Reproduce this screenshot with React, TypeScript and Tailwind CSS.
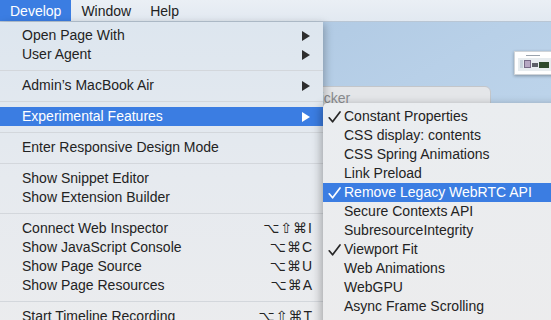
import React from 'react';

const font = { fontFamily: '"Liberation Sans", "DejaVu Sans", Arial, sans-serif' };

type Item =
  | { sep: true }
  | { sep?: false; label: string; arrow?: boolean; keys?: string; active?: boolean };

const mainItems: Item[] = [
  { label: 'Open Page With', arrow: true },
  { label: 'User Agent', arrow: true },
  { sep: true },
  { label: 'Admin’s MacBook Air', arrow: true },
  { sep: true },
  { label: 'Experimental Features', arrow: true, active: true },
  { sep: true },
  { label: 'Enter Responsive Design Mode' },
  { sep: true },
  { label: 'Show Snippet Editor' },
  { label: 'Show Extension Builder' },
  { sep: true },
  { label: 'Connect Web Inspector', keys: '⌥⇧⌘I' },
  { label: 'Show JavaScript Console', keys: '⌥⌘C' },
  { label: 'Show Page Source', keys: '⌥⌘U' },
  { label: 'Show Page Resources', keys: '⌥⌘A' },
  { sep: true },
  { label: 'Start Timeline Recording', keys: '⌥⇧⌘T' },
];

const features = [
  { label: 'Constant Properties', checked: true },
  { label: 'CSS display: contents' },
  { label: 'CSS Spring Animations' },
  { label: 'Link Preload' },
  { label: 'Remove Legacy WebRTC API', checked: true, active: true },
  { label: 'Secure Contexts API' },
  { label: 'SubresourceIntegrity' },
  { label: 'Viewport Fit', checked: true },
  { label: 'Web Animations' },
  { label: 'WebGPU' },
  { label: 'Async Frame Scrolling' },
];

const Arrow = ({ white }: { white?: boolean }) => (
  <svg width="8" height="10" viewBox="0 0 8 10">
    <path d="M0 0 L8 5 L0 10 Z" fill={white ? '#ffffff' : '#2e2e2e'} />
  </svg>
);

const Check = ({ white }: { white?: boolean }) => (
  <svg width="13" height="12" viewBox="0 0 13 12">
    <path
      d="M1.2 6.8 L4.6 10.8 L12 1"
      fill="none"
      stroke={white ? '#ffffff' : '#262626'}
      strokeWidth="1.7"
      strokeLinecap="round"
      strokeLinejoin="round"
    />
  </svg>
);

const MenuRow = ({ item }: { item: Item }) => {
  if (item.sep) {
    return (
      <div className="flex h-[12px] items-center">
        <div className="h-px w-full bg-[#d3d7dc]" />
      </div>
    );
  }
  return (
    <div
      className={
        item.active
          ? 'flex h-[19px] items-center justify-between bg-[#3b7de2] pb-[2px] pl-[22px] text-white'
          : 'flex h-[19px] items-center justify-between pb-[2px] pl-[22px] text-[#232323]'
      }
    >
      <span>{item.label}</span>
      {item.arrow && (
        <span className="flex pt-[2px] pr-[13px]">
          <Arrow white={item.active} />
        </span>
      )}
      {item.keys && <span className="pr-[10px] tracking-[1px]">{item.keys}</span>}
    </div>
  );
};

export default function App() {
  return (
    <div
      className="relative h-[320px] w-[551px] overflow-hidden bg-gradient-to-br from-[#a6c1dd] via-[#b8d0e8] to-[#c6dbef] text-[14px] leading-none"
      style={font}
    >
      {/* menu bar */}
      <div className="flex h-[22px] items-stretch border-b border-[#b9c6d4] bg-gradient-to-b from-[#eaeff5] to-[#e2e9f1] text-[#222]">
        <div className="flex items-center bg-[#3b7de2] px-[10px] text-white">Develop</div>
        <div className="flex items-center px-[10px]">Window</div>
        <div className="flex items-center px-[9px]">Help</div>
      </div>

      {/* background window (partly hidden) */}
      <div className="absolute left-[260px] top-[86px] h-[40px] w-[231px] rounded-tr-[6px] border border-[#c3c6ca] bg-[#e4e6e9] pl-[13px] pt-[4px] text-[#8a8c8f]">
        <span>Color Picker</span>
        <div className="mt-[2px] mr-[10px] h-px bg-[#c5c8cc]" />
      </div>

      {/* thumbnail on desktop */}
      <div className="absolute left-[514px] top-[51px] flex h-[24px] w-[50px] flex-col gap-[2px] border border-[#d0d4d8] bg-white p-[3px] shadow-[0_1px_3px_rgba(0,0,0,0.3)]">
        <div className="ml-[8px] h-px w-[14px] bg-[#9aa3ad]" />
        <div className="flex h-[14px] gap-[1px] bg-[#e7ecef] p-[2px]">
          <div className="h-[8px] w-[3px] bg-[#c8d3dc]" />
          <div className="h-[8px] w-[7px] border border-[#776a86] bg-[#b7a8c3]" />
          <div className="mt-[3px] h-[4px] w-[6px] bg-[#5b5f66]" />
          <div className="mt-[2px] h-[6px] w-[10px] bg-[#2f4a2c]" />
        </div>
      </div>

      {/* Develop menu */}
      <div className="absolute left-0 top-[22px] h-[310px] w-[323px] bg-gradient-to-b from-[#dde6ef] via-[#e6eaef] to-[#ebecee] pt-[4px] shadow-[2px_2px_8px_rgba(0,0,0,0.25)]">
        {mainItems.map((item, i) => (
          <MenuRow key={i} item={item} />
        ))}
      </div>

      {/* Experimental Features submenu */}
      <div className="absolute left-[323px] top-[103px] h-[230px] w-[240px] rounded-tl-[5px] bg-gradient-to-b from-[#eaedf0] to-[#ececed] pt-[4px] shadow-[-2px_2px_10px_rgba(0,0,0,0.3)]">
        {features.map((f) => (
          <div
            key={f.label}
            className={
              f.active
                ? 'flex h-[19px] items-center bg-[#3b7de2] pb-[2px] text-white'
                : 'flex h-[19px] items-center pb-[2px] text-[#232323]'
            }
          >
            <span className="flex w-[21px] justify-end pt-[2px] pr-[3px]">
              {f.checked && <Check white={f.active} />}
            </span>
            <span>{f.label}</span>
          </div>
        ))}
      </div>
    </div>
  );
}
